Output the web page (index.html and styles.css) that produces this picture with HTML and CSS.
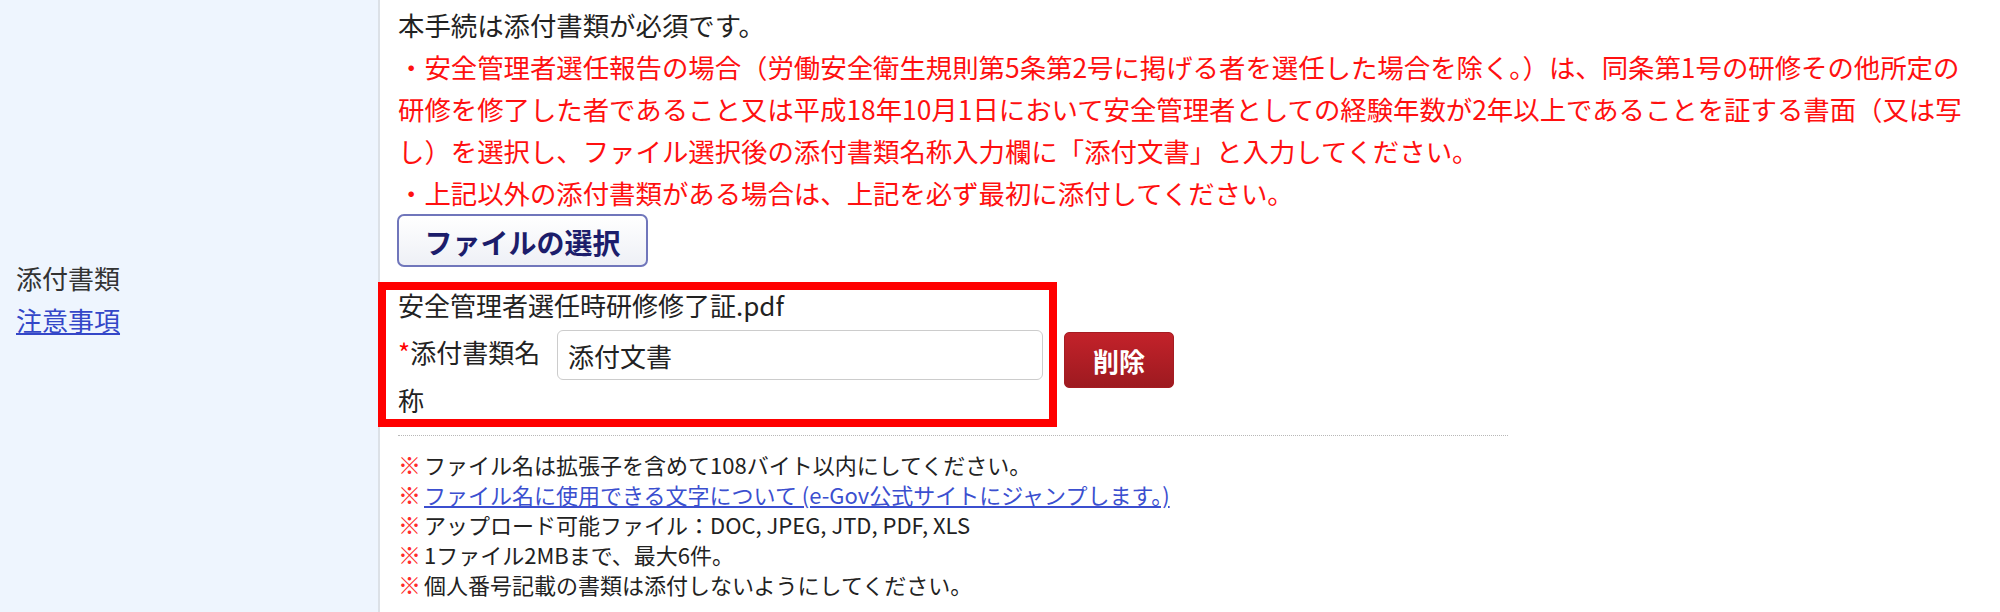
FILE: index.html
```html
<!DOCTYPE html>
<html lang="ja">
<head>
    <meta charset="UTF-8">
    <meta name="viewport" content="width=device-width, initial-scale=1.0">
    <title>添付書類</title>
    <link rel="stylesheet" href="styles.css">
</head>
<body>
<div class="form-row">
    <div class="form-label">
        <span>添付書類</span>
        <a href="#" class="label-link">注意事項</a>
    </div>

    <div class="form-field">
        <div class="lead">
            本手続は添付書類が必須です。<br>
            <span class="lead-red">・安全管理者選任報告の場合（労働安全衛生規則第5条第2号に掲げる者を選任した場合を除く。）は、同条第1号の研修その他所定の<br>研修を修了した者であること又は平成18年10月1日において安全管理者としての経験年数が2年以上であることを証する書面（又は写<br>し）を選択し、ファイル選択後の添付書類名称入力欄に「添付文書」と入力してください。<br>・上記以外の添付書類がある場合は、上記を必ず最初に添付してください。</span>
        </div>

        <button type="button" class="select-button">ファイルの選択</button>

        <div class="file-item">
            <div class="file-name">安全管理者選任時研修修了証.pdf</div>
            <div class="file-row">
                <label for="attachName" class="file-label"><span class="required">*</span>添付書類名<br>称</label>
                <input type="text" id="attachName" class="file-input" value="添付文書">
                <button type="button" class="delete-button">削除</button>
            </div>
            <div class="file-frame"></div>
        </div>

        <div class="separator"></div>

        <ul class="notes">
            <li><span class="mark">※</span>ファイル名は拡張子を含めて108バイト以内にしてください。</li>
            <li><span class="mark">※</span><a href="#" class="note-link">ファイル名に使用できる文字について (e-Gov公式サイトにジャンプします。)</a></li>
            <li><span class="mark">※</span>アップロード可能ファイル：DOC, JPEG, JTD, PDF, XLS</li>
            <li><span class="mark">※</span>1ファイル2MBまで、最大6件。</li>
            <li><span class="mark">※</span>個人番号記載の書類は添付しないようにしてください。</li>
        </ul>
    </div>
</div>
</body>
</html>
```

FILE: styles.css
```css
body {
    margin: 0;
    background-color: #ffffff;
    color: #222222;
    font-family: "Noto Sans CJK JP", "Noto Sans", sans-serif;
}

.form-row {
    display: flex;
    min-height: 612px;
}

.form-label {
    width: 362px;
    padding: 0 0 14px 16px;
    background-color: #eef5fe;
    border-right: 2px solid #dce1e7;
    display: flex;
    flex-direction: column;
    justify-content: center;
    font-size: 26px;
    line-height: 42px;
    color: #333333;
}

.label-link {
    color: #3447c8;
    align-self: flex-start;
}

.form-field {
    flex: 1;
    padding: 4px 18px 0 18px;
}

.lead {
    font-size: 26.4px;
    line-height: 42px;
}

.lead-red {
    color: #ff1010;
}

.select-button {
    display: block;
    width: 251px;
    height: 53px;
    margin-left: -1px;
    background: linear-gradient(#ffffff, #eef0f6);
    border: 2px solid #7076bb;
    border-radius: 7px;
    color: #1c1d6b;
    font-family: inherit;
    font-size: 28px;
    font-weight: bold;
    padding: 2px 0 0 0;
}

.file-item {
    position: relative;
    margin-top: 17px;
}

.file-name {
    font-size: 26px;
    line-height: 42px;
}

.file-row {
    display: flex;
    align-items: flex-start;
    margin-top: 2px;
}

.file-label {
    width: 156px;
    margin-right: 3px;
    font-size: 26px;
    line-height: 48px;
}

.required {
    color: #ff0000;
}

.file-input {
    box-sizing: border-box;
    width: 486px;
    height: 50px;
    margin-top: 2px;
    padding: 0 10px;
    border: 1px solid #cccccc;
    border-radius: 6px;
    font-family: inherit;
    font-size: 26px;
    color: #222222;
}

.delete-button {
    width: 110px;
    height: 56px;
    margin: 4px 0 0 21px;
    background: linear-gradient(#c3222a, #9d1a20);
    border: 1px solid #a51c22;
    border-radius: 5px;
    color: #ffffff;
    font-family: inherit;
    font-size: 26px;
    font-weight: bold;
    padding: 0;
}

/* annotation frame drawn over the attached file */
.file-frame {
    position: absolute;
    left: -20px;
    top: -2px;
    width: 679px;
    height: 145px;
    box-sizing: border-box;
    border: 8px solid #ff0000;
    pointer-events: none;
}

.separator {
    width: 1110px;
    margin-top: 11px;
    border-top: 1px dotted #b8b8b8;
}

.notes {
    list-style: none;
    margin: 13px 0 0 0;
    padding: 0;
    font-size: 22px;
    line-height: 30px;
}

.mark {
    display: inline-block;
    color: #ff2a2a;
    font-size: 23px;
    font-weight: bold;
    line-height: 1;
    margin-right: 3px;
}

.note-link {
    color: #3b4fcf;
}
```
